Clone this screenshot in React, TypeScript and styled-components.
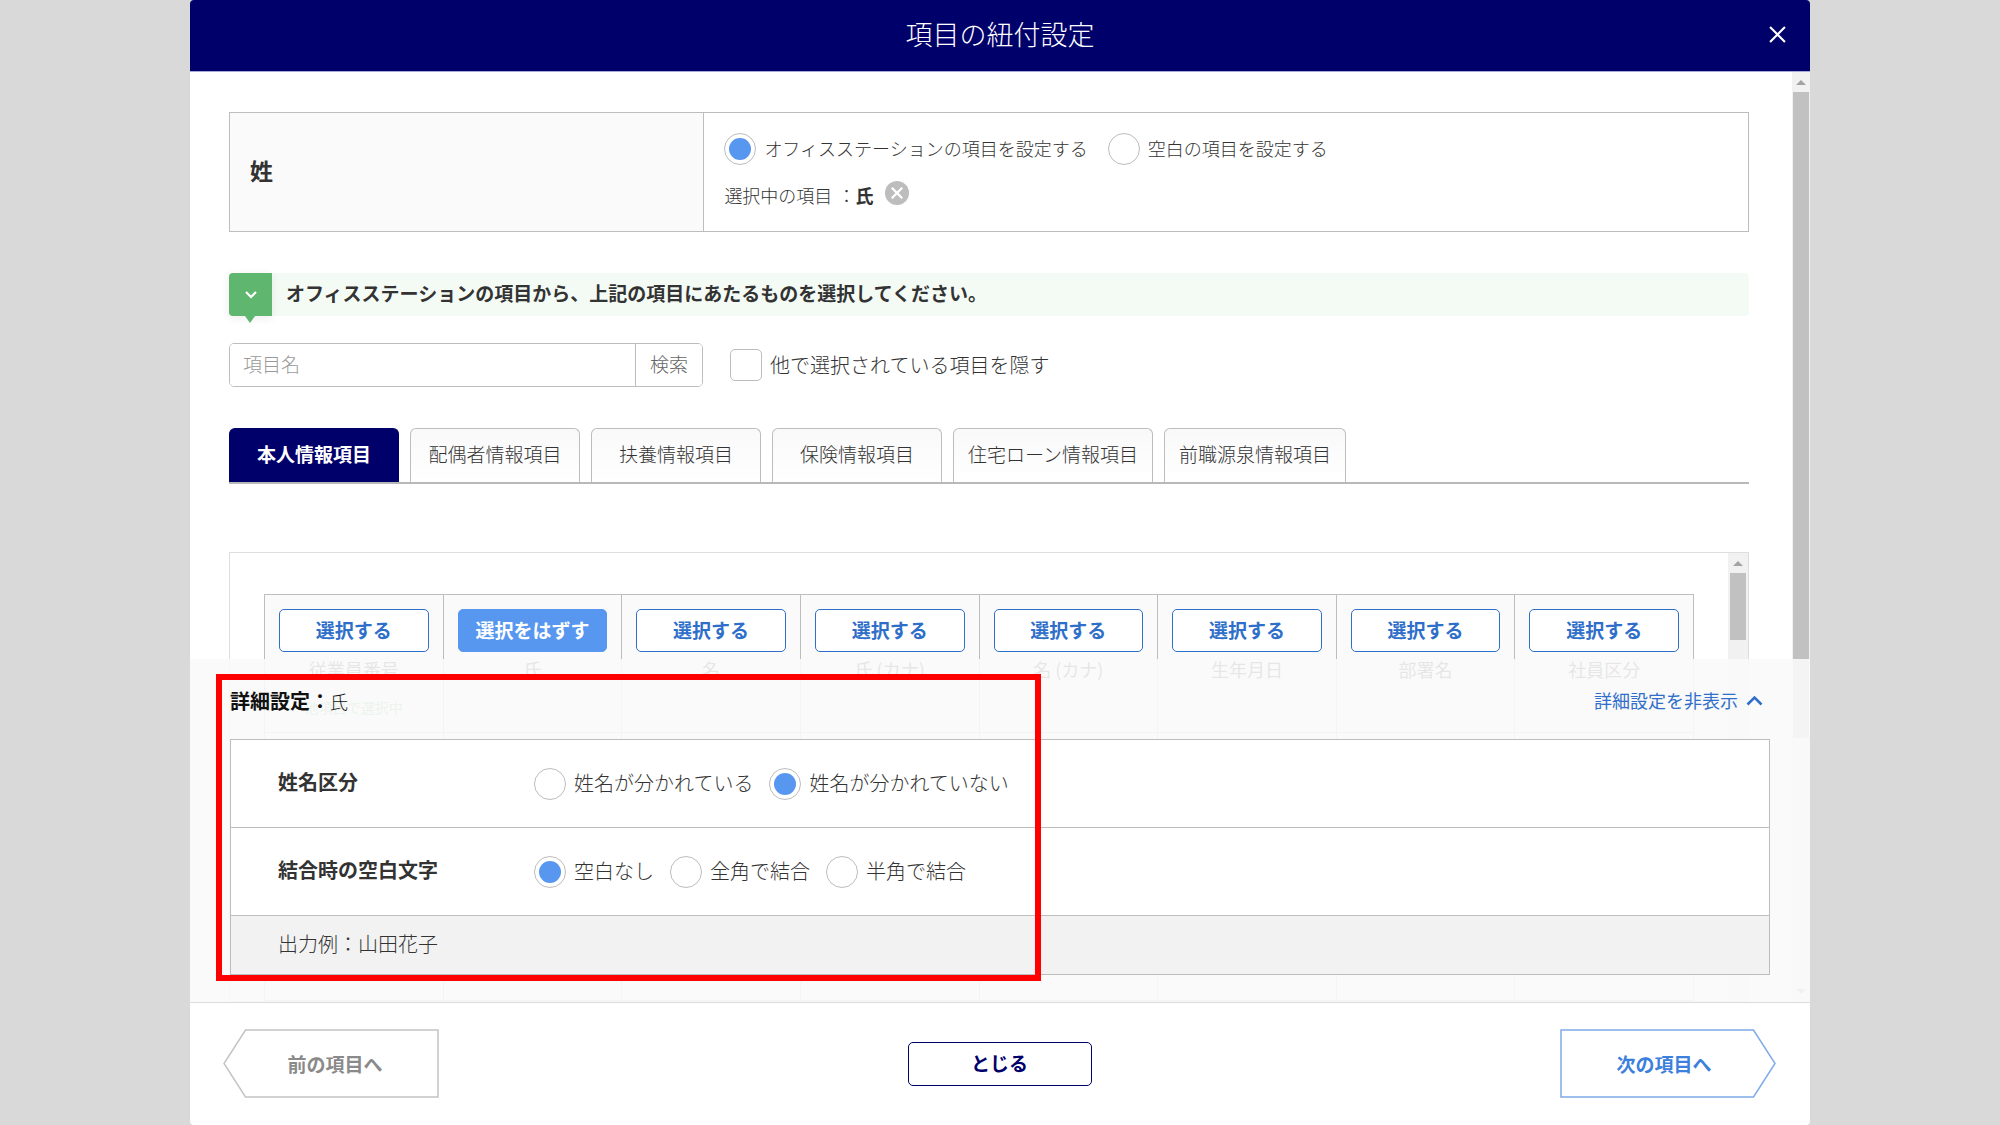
import React, { useState } from "react";
import styled, { createGlobalStyle, css } from "styled-components";

const color = {
  navy: "#00006b",
  blue: "#5897f0",
  link: "#2f6fc9",
  green: "#5fb66e",
  line: "#bdbdbd",
  text: "#333333",
};

const GlobalStyle = createGlobalStyle`
  *, *::before, *::after { box-sizing: border-box; }
  body {
    margin: 0;
    background: #d9d9d9;
    color: ${color.text};
    font-family: "Noto Sans CJK JP", sans-serif;
    font-size: 18px;
    font-weight: 300;
    line-height: 24px;
  }
  button, input { font: inherit; color: inherit; }
  button { cursor: pointer; padding: 0 0 2px; }
`;

const Dialog = styled.main`
  display: flex;
  flex-direction: column;
  height: 100vh;
  margin: 0 190px;
  background: #fff;
  border-radius: 4px;
  overflow: hidden;
`;

const Header = styled.header`
  display: grid;
  grid-template-columns: 1fr auto 1fr;
  align-items: center;
  height: 72px;
  padding: 0 21px 3px;
  background: ${color.navy};
  border-bottom: 1px solid #aaa8d8;
  color: #fff;
`;

const Title = styled.h1`
  grid-column: 2;
  margin: 0;
  font-size: 27px;
  line-height: 40px;
  font-weight: 300;
`;

const IconButton = styled.button`
  display: flex;
  align-items: center;
  justify-content: center;
  width: 24px;
  height: 24px;
  padding: 0;
  border: 0;
  background: transparent;
  color: #fff;
`;

const HeaderClose = styled(IconButton)`
  justify-self: end;
`;

const ClearButton = styled(IconButton)`
  margin-left: 12px;
  border-radius: 50%;
  background: ${color.line};
`;

const Body = styled.div`
  position: relative;
  display: flex;
  flex: 1;
  min-height: 0;
  overflow: hidden;
`;

const Content = styled.div`
  flex: 1;
  min-width: 0;
  padding: 40px 43px 0 39px;
`;

const Track = styled.div<{ $width: number }>`
  display: flex;
  flex-direction: column;
  align-items: center;
  flex: none;
  width: ${(p) => p.$width}px;
  padding-bottom: 6px;
  background: #f1f1f1;
`;

const TrackArrow = styled.svg`
  flex: none;
  width: 10px;
  height: 20px;
  fill: #a3a3a3;
`;

const Thumb = styled.div<{ $height: number }>`
  width: 16px;
  height: ${(p) => p.$height}px;
  margin-bottom: auto;
  background: #c1c1c1;
`;

const Target = styled.section`
  display: grid;
  grid-template-columns: 5fr 11fr;
  border: 1px solid ${color.line};
`;

const TargetName = styled.h2`
  display: flex;
  align-items: center;
  margin: 0;
  padding: 0 20px 4px;
  background: #fafafa;
  border-right: 1px solid ${color.line};
  font-size: 23px;
  font-weight: 700;
`;

const TargetValue = styled.div`
  padding: 20px 20px 22px;
`;

const Options = styled.div<{ $gap: number }>`
  display: flex;
  align-items: center;
  gap: ${(p) => p.$gap}px;
`;

const Choice = styled.label<{ $large?: boolean }>`
  display: flex;
  align-items: center;
  gap: 8px;
  white-space: nowrap;
  font-size: ${(p) => (p.$large ? 20 : 18)}px;
`;

const ChoiceText = styled.span`
  padding-bottom: 2px;
`;

const Radio = styled.input.attrs({ type: "radio" })`
  appearance: none;
  width: 32px;
  height: 32px;
  margin: 0;
  border: 1px solid ${color.line};
  border-radius: 50%;
  background: #fff;
  &:checked {
    padding: 4px;
    background: ${color.blue};
    background-clip: content-box;
  }
`;

const Checkbox = styled.input.attrs({ type: "checkbox" })`
  appearance: none;
  width: 32px;
  height: 32px;
  margin: 0;
  border: 1px solid ${color.line};
  border-radius: 5px;
  background: #fff;
  &:checked {
    padding: 6px;
    background: ${color.blue};
    background-clip: content-box;
  }
`;

const Selected = styled.div`
  display: flex;
  height: 28px;
  margin-top: 16px;
`;

const SelectedText = styled.p`
  align-self: center;
  margin: 0;
  span { margin-right: 5px; }
  b { font-weight: 700; }
`;

const Guide = styled.div`
  display: flex;
  align-items: center;
  height: 43px;
  margin-top: 41px;
  background: #f4fbf5;
  border-radius: 4px;
  font-size: 19px;
  font-weight: 700;
  p { margin: 0 14px; padding-bottom: 3px; }
`;

const GuideMark = styled.span`
  position: relative;
  display: flex;
  align-items: center;
  justify-content: center;
  width: 43px;
  height: 43px;
  border-radius: 4px 0 0 4px;
  background: ${color.green};
  box-shadow: 0 2px 10px rgba(0, 0, 0, 0.08);
  &::after {
    content: "";
    position: absolute;
    top: 100%;
    left: 16px;
    border: solid transparent;
    border-width: 7px 5px 0;
    border-top-color: ${color.green};
  }
`;

const SearchRow = styled.form`
  display: flex;
  align-items: center;
  gap: 27px;
  margin-top: 27px;
`;

const SearchBox = styled.div`
  display: flex;
  width: 474px;
  height: 44px;
  border: 1px solid ${color.line};
  border-radius: 5px;
  overflow: hidden;
  font-size: 19px;
`;

const SearchInput = styled.input`
  flex: 1;
  min-width: 0;
  padding: 0 13px 2px;
  border: 0;
  outline: 0;
  &::placeholder { color: #999; opacity: 1; }
`;

const SearchButton = styled.button`
  width: 67px;
  border: 0;
  border-left: 1px solid ${color.line};
  background: #fff;
  color: #666;
`;

const Tabs = styled.div`
  display: flex;
  gap: 11px;
  margin-top: 41px;
  border-bottom: 2px solid #b8b8b8;
`;

const Tab = styled.button<{ $active: boolean }>`
  min-width: 170px;
  height: 54px;
  padding: 0 14px 3px;
  border: 1px solid ${color.line};
  border-bottom: 0;
  border-radius: 6px 6px 0 0;
  background: linear-gradient(#f9f9f9, #fff);
  font-size: 19px;
  white-space: nowrap;
  ${(p) =>
    p.$active &&
    css`
      border-color: ${color.navy};
      background: ${color.navy};
      color: #fff;
      font-weight: 700;
    `}
`;

const Panel = styled.section`
  display: flex;
  margin-top: 68px;
  border: 1px solid #dedede;
`;

const PanelInner = styled.div`
  flex: 1;
  min-width: 0;
  padding: 41px 34px 0;
`;

const Grid = styled.table`
  width: 100%;
  table-layout: fixed;
  border-collapse: collapse;
  th, td { border: 1px solid ${color.line}; background: #fafafa; }
  th {
    height: 138px;
    padding: 14px 14px 0;
    vertical-align: top;
    font-weight: 400;
  }
  td { height: 268px; }
`;

const PickButton = styled.button<{ $on: boolean }>`
  display: block;
  width: 100%;
  height: 43px;
  margin-bottom: 5px;
  border: 1px solid ${(p) => (p.$on ? color.blue : color.link)};
  border-radius: 5px;
  background: ${(p) => (p.$on ? color.blue : "#fff")};
  color: ${(p) => (p.$on ? "#fff" : color.link)};
  font-size: 19px;
  font-weight: 700;
`;

const Used = styled.span`
  display: block;
  margin-top: 14px;
  color: ${color.green};
  font-size: 14px;
`;

const Drawer = styled.section`
  position: absolute;
  inset: auto 0 0 0;
  padding: 26px 40px 27px;
  background: rgba(250, 250, 250, 0.9);
`;

const DrawerHead = styled.div`
  display: flex;
  align-items: center;
  justify-content: space-between;
  height: 32px;
  margin-bottom: 22px;
  padding-right: 7px;
`;

const DrawerTitle = styled.h2`
  margin: 0;
  color: #111;
  font-size: 20px;
  font-weight: 700;
  span { font-size: 18px; font-weight: 300; }
`;

const DrawerToggle = styled.button`
  display: flex;
  align-items: center;
  gap: 8px;
  border: 0;
  background: transparent;
  color: ${color.link};
  font-weight: 400;
`;

const Settings = styled.div`
  border: 1px solid ${color.line};
  background: #fff;
  font-size: 20px;
`;

const Setting = styled.div`
  display: grid;
  grid-template-columns: 256px 1fr;
  align-items: center;
  height: 88px;
  padding-left: 47px;
  border-bottom: 1px solid ${color.line};
  strong { padding-bottom: 4px; font-weight: 700; }
`;

const Example = styled.p`
  margin: 0;
  padding: 16px 47px 18px;
  background: #f2f2f2;
`;

const Highlight = styled.div`
  position: absolute;
  top: 15px;
  left: 26px;
  width: 825px;
  height: 307px;
  border: 6px solid #ff0000;
  pointer-events: none;
`;

const Footer = styled.footer`
  display: flex;
  align-items: center;
  justify-content: space-between;
  height: 123px;
  padding: 0 34px 1px 33px;
  border-top: 1px solid #dcdcdc;
`;

const CloseButton = styled.button`
  width: 184px;
  height: 44px;
  border: 1px solid ${color.navy};
  border-radius: 5px;
  background: #fff;
  color: ${color.navy};
  font-size: 19px;
  font-weight: 700;
`;

const StepButton = styled.button<{ $next?: boolean }>`
  position: relative;
  width: 216px;
  height: 69px;
  padding: ${(p) => (p.$next ? "0 8px 0 0" : "0 0 0 8px")};
  border: 0;
  background: transparent;
  color: ${(p) => (p.$next ? "#3d7fdc" : "#8a8a8a")};
  font-size: 19px;
  font-weight: 700;
  svg {
    position: absolute;
    inset: 0;
    fill: none;
    stroke: ${(p) => (p.$next ? "#7fabe8" : "#c4c4c4")};
  }
`;

const Cross = ({ size, weight }: { size: number; weight: number }) => (
  <svg width={size} height={size} viewBox="0 0 16 16" aria-hidden="true">
    <path d="M1 1 15 15M15 1 1 15" stroke="currentColor" strokeWidth={weight} fill="none" />
  </svg>
);

const Scrollbar = ({ width, thumb, down }: { width: number; thumb: number; down?: boolean }) => (
  <Track $width={width} aria-hidden="true">
    <TrackArrow viewBox="0 0 10 20"><path d="M0 13 5 8l5 5z" /></TrackArrow>
    <Thumb $height={thumb} />
    {down && <TrackArrow viewBox="0 0 10 20"><path d="M0 13 5 18l5-5z" /></TrackArrow>}
  </Track>
);

const tabs = [
  "本人情報項目",
  "配偶者情報項目",
  "扶養情報項目",
  "保険情報項目",
  "住宅ローン情報項目",
  "前職源泉情報項目",
];

const fields = [
  { name: "従業員番号", used: true },
  { name: "氏" },
  { name: "名" },
  { name: "氏 (カナ)" },
  { name: "名 (カナ)" },
  { name: "生年月日" },
  { name: "部署名" },
  { name: "社員区分" },
];

type RadioSetProps = { name: string; options: string[]; initial: number; gap: number; large?: boolean };

function RadioSet({ name, options, initial, gap, large }: RadioSetProps) {
  const [value, setValue] = useState(initial);
  return (
    <Options $gap={gap} role="radiogroup">
      {options.map((option, i) => (
        <Choice key={option} $large={large}>
          <Radio name={name} checked={value === i} onChange={() => setValue(i)} />
          <ChoiceText>{option}</ChoiceText>
        </Choice>
      ))}
    </Options>
  );
}

export default function App() {
  const [tab, setTab] = useState(0);
  const [picked, setPicked] = useState(1);

  return (
    <>
      <GlobalStyle />
      <Dialog>
        <Header>
          <Title>項目の紐付設定</Title>
          <HeaderClose aria-label="とじる"><Cross size={17} weight={2} /></HeaderClose>
        </Header>

        <Body>
          <Content>
            <Target>
              <TargetName>姓</TargetName>
              <TargetValue>
                <RadioSet
                  name="source"
                  options={["オフィスステーションの項目を設定する", "空白の項目を設定する"]}
                  initial={0}
                  gap={20}
                />
                <Selected>
                  <SelectedText><span>選択中の項目</span>：<b>氏</b></SelectedText>
                  <ClearButton aria-label="解除"><Cross size={12} weight={3} /></ClearButton>
                </Selected>
              </TargetValue>
            </Target>

            <Guide>
              <GuideMark>
                <svg width="12" height="8" viewBox="0 0 12 8" aria-hidden="true">
                  <path d="M1 1 6 6l5-5" fill="none" stroke="#fff" strokeWidth="2.2" />
                </svg>
              </GuideMark>
              <p>オフィスステーションの項目から、上記の項目にあたるものを選択してください。</p>
            </Guide>

            <SearchRow onSubmit={(e) => e.preventDefault()}>
              <SearchBox>
                <SearchInput placeholder="項目名" aria-label="項目名" />
                <SearchButton>検索</SearchButton>
              </SearchBox>
              <Choice $large>
                <Checkbox />
                <span>他で選択されている項目を隠す</span>
              </Choice>
            </SearchRow>

            <Tabs role="tablist">
              {tabs.map((label, i) => (
                <Tab key={label} role="tab" aria-selected={tab === i} $active={tab === i} onClick={() => setTab(i)}>
                  {label}
                </Tab>
              ))}
            </Tabs>

            <Panel>
              <PanelInner>
                <Grid>
                  <thead>
                    <tr>
                      {fields.map((field, i) => (
                        <th key={field.name}>
                          <PickButton $on={picked === i} onClick={() => setPicked(picked === i ? -1 : i)}>
                            {picked === i ? "選択をはずす" : "選択する"}
                          </PickButton>
                          {field.name}
                          {field.used && <Used>他項目で選択中</Used>}
                        </th>
                      ))}
                    </tr>
                  </thead>
                  <tbody>
                    <tr>{fields.map((field) => <td key={field.name} />)}</tr>
                  </tbody>
                </Grid>
              </PanelInner>
              <Scrollbar width={20} thumb={67} />
            </Panel>
          </Content>
          <Scrollbar width={18} thumb={646} down />

          <Drawer>
            <DrawerHead>
              <DrawerTitle>詳細設定：<span>氏</span></DrawerTitle>
              <DrawerToggle>
                詳細設定を非表示
                <svg width="17" height="11" viewBox="0 0 17 11" aria-hidden="true">
                  <path d="M1.5 9.5l7-7 7 7" fill="none" stroke="currentColor" strokeWidth="2.6" />
                </svg>
              </DrawerToggle>
            </DrawerHead>
            <Settings>
              <Setting>
                <strong>姓名区分</strong>
                <RadioSet name="split" options={["姓名が分かれている", "姓名が分かれていない"]} initial={1} gap={16} large />
              </Setting>
              <Setting>
                <strong>結合時の空白文字</strong>
                <RadioSet name="blank" options={["空白なし", "全角で結合", "半角で結合"]} initial={0} gap={16} large />
              </Setting>
              <Example>出力例：山田花子</Example>
            </Settings>
            <Highlight />
          </Drawer>
        </Body>

        <Footer>
          <StepButton>
            <svg width="216" height="69" viewBox="0 0 216 69" aria-hidden="true">
              <path d="M22.5 1H215V68H22.5L1 34.5z" strokeWidth="1.5" />
            </svg>
            前の項目へ
          </StepButton>
          <CloseButton>とじる</CloseButton>
          <StepButton $next>
            <svg width="216" height="69" viewBox="0 0 216 69" aria-hidden="true">
              <path d="M193.5 1H1V68H193.5L215 34.5z" strokeWidth="1.5" />
            </svg>
            次の項目へ
          </StepButton>
        </Footer>
      </Dialog>
    </>
  );
}
